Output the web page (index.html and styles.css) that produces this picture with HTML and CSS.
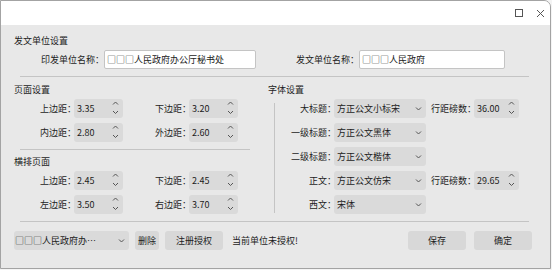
FILE: index.html
```html
<!DOCTYPE html>
<html lang="zh-CN">
    <head>
        <meta charset="UTF-8">
        <meta name="viewport" content="width=device-width, initial-scale=1.0">
        <link rel="stylesheet" href="styles.css">
        <title>公文格式设置</title>
    </head>
    <body>
        <div class="window">
            <!--======================= タイトルバー =======================-->
            <div class="titlebar">
                <svg class="tbIcon" width="10" height="10" viewBox="0 0 10 10"><rect x="1.5" y="1.5" width="7" height="7" fill="none" stroke="#555" stroke-width="1"/></svg>
                <svg class="tbIcon" width="9" height="9" viewBox="0 0 9 9"><path d="M1 1 L8 8 M8 1 L1 8" fill="none" stroke="#555" stroke-width="1"/></svg>
            </div>

            <div class="content">
                <!--======================= 发文单位设置 =======================-->
                <div class="groupTitle">发文单位设置</div>
                <div class="unitRow">
                    <div class="lbl unitLabel1">印发单位名称：</div>
                    <div class="textbox unitInput1">□□□人民政府办公厅秘书处</div>
                    <div class="lbl unitLabel2">发文单位名称：</div>
                    <div class="textbox unitInput2">□□□人民政府</div>
                </div>

                <div class="sep"></div>

                <div class="settings">
                    <!--======================= 页面设置 =======================-->
                    <div class="pageCol">
                        <div class="groupTitle">页面设置</div>
                        <div class="spinGrid">
                            <div class="lbl">上边距：</div>
                            <div class="spin">3.35<svg class="spinArrows" width="7" height="19" viewBox="0 0 7 19"><path d="M1 5.5 L3.5 3 L6 5.5 M1 12 L3.5 14.5 L6 12" fill="none" stroke="#555" stroke-width="1"/></svg></div>
                            <div class="lbl">下边距：</div>
                            <div class="spin">3.20<svg class="spinArrows" width="7" height="19" viewBox="0 0 7 19"><path d="M1 5.5 L3.5 3 L6 5.5 M1 12 L3.5 14.5 L6 12" fill="none" stroke="#555" stroke-width="1"/></svg></div>
                            <div class="lbl">内边距：</div>
                            <div class="spin">2.80<svg class="spinArrows" width="7" height="19" viewBox="0 0 7 19"><path d="M1 5.5 L3.5 3 L6 5.5 M1 12 L3.5 14.5 L6 12" fill="none" stroke="#555" stroke-width="1"/></svg></div>
                            <div class="lbl">外边距：</div>
                            <div class="spin">2.60<svg class="spinArrows" width="7" height="19" viewBox="0 0 7 19"><path d="M1 5.5 L3.5 3 L6 5.5 M1 12 L3.5 14.5 L6 12" fill="none" stroke="#555" stroke-width="1"/></svg></div>
                        </div>

                        <div class="sep sepShort"></div>

                        <div class="groupTitle groupTitle2">横排页面</div>
                        <div class="spinGrid">
                            <div class="lbl">上边距：</div>
                            <div class="spin">2.45<svg class="spinArrows" width="7" height="19" viewBox="0 0 7 19"><path d="M1 5.5 L3.5 3 L6 5.5 M1 12 L3.5 14.5 L6 12" fill="none" stroke="#555" stroke-width="1"/></svg></div>
                            <div class="lbl">下边距：</div>
                            <div class="spin">2.45<svg class="spinArrows" width="7" height="19" viewBox="0 0 7 19"><path d="M1 5.5 L3.5 3 L6 5.5 M1 12 L3.5 14.5 L6 12" fill="none" stroke="#555" stroke-width="1"/></svg></div>
                            <div class="lbl">左边距：</div>
                            <div class="spin">3.50<svg class="spinArrows" width="7" height="19" viewBox="0 0 7 19"><path d="M1 5.5 L3.5 3 L6 5.5 M1 12 L3.5 14.5 L6 12" fill="none" stroke="#555" stroke-width="1"/></svg></div>
                            <div class="lbl">右边距：</div>
                            <div class="spin">3.70<svg class="spinArrows" width="7" height="19" viewBox="0 0 7 19"><path d="M1 5.5 L3.5 3 L6 5.5 M1 12 L3.5 14.5 L6 12" fill="none" stroke="#555" stroke-width="1"/></svg></div>
                        </div>
                    </div>

                    <!--======================= 字体设置 =======================-->
                    <div class="fontCol">
                        <div class="groupTitle">字体设置</div>
                        <div class="fontBody">
                            <div class="vline"></div>
                            <div class="fontGrid">
                                <div class="lbl">大标题：</div>
                                <div class="combo">方正公文小标宋<svg class="comboArrow" width="7" height="4" viewBox="0 0 7 4"><path d="M1 0.5 L3.5 3 L6 0.5" fill="none" stroke="#555" stroke-width="1"/></svg></div>
                                <div class="lbl">行距磅数：</div>
                                <div class="spin">36.00<svg class="spinArrows" width="7" height="19" viewBox="0 0 7 19"><path d="M1 5.5 L3.5 3 L6 5.5 M1 12 L3.5 14.5 L6 12" fill="none" stroke="#555" stroke-width="1"/></svg></div>

                                <div class="lbl">一级标题：</div>
                                <div class="combo">方正公文黑体<svg class="comboArrow" width="7" height="4" viewBox="0 0 7 4"><path d="M1 0.5 L3.5 3 L6 0.5" fill="none" stroke="#555" stroke-width="1"/></svg></div>
                                <div></div><div></div>

                                <div class="lbl">二级标题：</div>
                                <div class="combo">方正公文楷体<svg class="comboArrow" width="7" height="4" viewBox="0 0 7 4"><path d="M1 0.5 L3.5 3 L6 0.5" fill="none" stroke="#555" stroke-width="1"/></svg></div>
                                <div></div><div></div>

                                <div class="lbl">正文：</div>
                                <div class="combo">方正公文仿宋<svg class="comboArrow" width="7" height="4" viewBox="0 0 7 4"><path d="M1 0.5 L3.5 3 L6 0.5" fill="none" stroke="#555" stroke-width="1"/></svg></div>
                                <div class="lbl">行距磅数：</div>
                                <div class="spin">29.65<svg class="spinArrows" width="7" height="19" viewBox="0 0 7 19"><path d="M1 5.5 L3.5 3 L6 5.5 M1 12 L3.5 14.5 L6 12" fill="none" stroke="#555" stroke-width="1"/></svg></div>

                                <div class="lbl">西文：</div>
                                <div class="combo">宋体<svg class="comboArrow" width="7" height="4" viewBox="0 0 7 4"><path d="M1 0.5 L3.5 3 L6 0.5" fill="none" stroke="#555" stroke-width="1"/></svg></div>
                                <div></div><div></div>
                            </div>
                        </div>
                    </div>
                </div>

                <div class="sep sepBottom"></div>

                <!--======================= 下部ボタン =======================-->
                <div class="bottomBar">
                    <div class="combo unitCombo">□□□人民政府办…<svg class="comboArrow" width="7" height="4" viewBox="0 0 7 4"><path d="M1 0.5 L3.5 3 L6 0.5" fill="none" stroke="#555" stroke-width="1"/></svg></div>
                    <div class="btn btnDelete">删除</div>
                    <div class="btn btnWide">注册授权</div>
                    <div class="status">当前单位未授权!</div>
                    <div class="btn btnWide btnSave">保存</div>
                    <div class="btn btnWide btnOk">确定</div>
                </div>
            </div>
        </div>
    </body>
</html>
```
FILE: styles.css
```css
*{
    box-sizing: border-box;
}

body{
    margin: 0;
    font-family: "Noto Sans CJK SC", "Noto Sans", sans-serif;
    font-size: 9px;
    color: rgb(28, 28, 28);
    background-color: rgb(244, 244, 244);
}

/*************************************************************************************************/

/* ウィンドウ枠 */
.window{
    width: 551px;
    height: 269px;
    border: 1px solid rgb(163, 163, 163);
    border-radius: 0 7px 0 0;
    background-color: rgb(232, 232, 232);
    overflow: hidden;
}

.titlebar{
    height: 24px;
    background-color: white;
    display: flex;
    justify-content: flex-end;
    align-items: center;
    gap: 12px;
    padding-right: 5px;
}

.tbIcon{
    display: block;
}

.content{
    padding: 9px 18px 0 13px;
}

.groupTitle{
    height: 14px;
    line-height: 14px;
}

.lbl{
    text-align: right;
    line-height: 19px;
    white-space: nowrap;
}

.sep{
    height: 1px;
    width: 509px;
    margin: 7px 0 0 6px;
    background-color: rgb(196, 196, 196);
}

/*************************************************************************************************/

/* 发文单位 */
.unitRow{
    display: flex;
    margin-top: 2px;
    height: 19px;
}

.unitLabel1{
    width: 90px;
}

.unitLabel2{
    width: 103px;
}

.textbox{
    height: 19px;
    line-height: 17px;
    background-color: white;
    border: 1px solid rgb(196, 196, 196);
    border-radius: 2px;
    padding-left: 2px;
    white-space: nowrap;
}

.unitInput1{
    width: 152px;
}

.unitInput2{
    width: 146px;
}

/*************************************************************************************************/

/* 页面设置・字体设置 */
.settings{
    display: flex;
    margin-top: 6px;
}

.pageCol{
    width: 254px;
}

.spinGrid{
    display: grid;
    grid-template-columns: 60px 49px 66px 49px;
    grid-auto-rows: 19px;
    row-gap: 5px;
    margin-top: 2px;
}

/* 全角コロンを入力欄側へ寄せる */
.spinGrid .lbl, .fontGrid .lbl{
    margin-right: -2px;
}

.sepShort{
    width: 230px;
}

.groupTitle2{
    margin-top: 5px;
}

.spin, .combo{
    display: flex;
    align-items: center;
    justify-content: space-between;
    height: 19px;
    padding: 0 4px 0 3px;
    background-color: rgb(218, 218, 218);
    border-radius: 3px;
    white-space: nowrap;
}

.fontBody{
    display: flex;
    margin-top: 2px;
}

.vline{
    width: 1px;
    height: 110px;
    margin: 4px 0 0 6px;
    background-color: rgb(196, 196, 196);
}

.fontGrid{
    display: grid;
    grid-template-columns: 59px 92px 48px 45px;
    grid-auto-rows: 19px;
    row-gap: 5px;
}

/*************************************************************************************************/

/* 下部ボタン */
.bottomBar{
    display: flex;
    align-items: center;
    margin-top: 9px;
    height: 19px;
}

.unitCombo{
    width: 115px;
    padding-left: 1px;
}

.btn{
    height: 19px;
    line-height: 19px;
    text-align: center;
    background-color: rgb(216, 216, 216);
    border-radius: 3px;
}

.btnDelete{
    width: 24px;
    margin-left: 6px;
}

.btnWide{
    width: 58px;
    margin-left: 6px;
}

.status{
    margin-left: 9px;
}

.btnSave{
    margin-left: auto;
}

.btnOk{
    margin-left: 8px;
}
```
